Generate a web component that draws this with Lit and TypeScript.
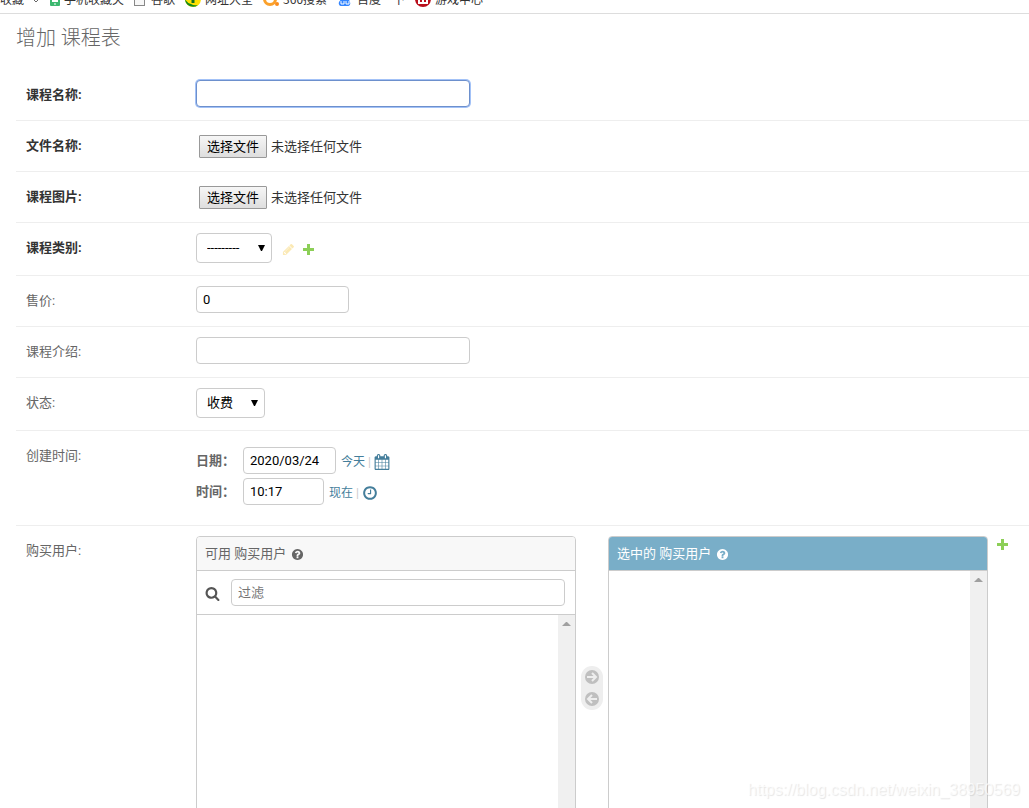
import { LitElement, html, css } from "lit";
import { customElement, query, state, property } from "lit/decorators.js";

const PATHS = {
  calendar:
    "M192 1664h288v-288h-288v288zm352 0h320v-288h-320v288zm-352-352h288v-320h-288v320zm352 0h320v-320h-320v320zm-352-384h288v-288h-288v288zm736 736h320v-288h-320v288zm-384-736h320v-288h-320v288zm768 736h288v-288h-288v288zm-384-352h320v-320h-320v320zm-352-864v-288q0-13-9.5-22.5t-22.5-9.5h-64q-13 0-22.5 9.5t-9.5 22.5v288q0 13 9.5 22.5t22.5 9.5h64q13 0 22.5-9.5t9.5-22.5zm736 864h288v-320h-288v320zm-384-384h320v-288h-320v288zm384 0h288v-288h-288v288zm32-480v-288q0-13-9.5-22.5t-22.5-9.5h-64q-13 0-22.5 9.5t-9.5 22.5v288q0 13 9.5 22.5t22.5 9.5h64q13 0 22.5-9.5t9.5-22.5zm384-64v1280q0 52-38 90t-90 38h-1408q-52 0-90-38t-38-90v-1280q0-52 38-90t90-38h128v-96q0-66 47-113t113-47h64q66 0 113 47t47 113v96h384v-96q0-66 47-113t113-47h64q66 0 113 47t47 113v96h128q52 0 90 38t38 90z",
  clock:
    "M1024 544v448q0 14-9 23t-23 9h-320q-14 0-23-9t-9-23v-64q0-14 9-23t23-9h224v-352q0-14 9-23t23-9h64q14 0 23 9t9 23zm416 352q0-148-73-273t-198-198-273-73-273 73-198 198-73 273 73 273 198 198 273 73 273-73 198-198 73-273zm224 0q0 209-103 385.5t-279.5 279.5-385.5 103-385.5-103-279.5-279.5-103-385.5 103-385.5 279.5-279.5 385.5-103 385.5 103 279.5 279.5 103 385.5z",
  help: "M1024 1376v-192q0-14-9-23t-23-9h-192q-14 0-23 9t-9 23v192q0 14 9 23t23 9h192q14 0 23-9t9-23zm256-672q0-88-55.5-163t-138.5-116-170-41q-243 0-371 213-15 24 8 42l132 100q7 6 19 6 16 0 25-12 53-68 86-92 34-24 86-24 48 0 85.5 26t37.5 59q0 38-20 61t-68 45q-63 28-115.5 86.5t-52.5 125.5v36q0 14 9 23t23 9h192q14 0 23-9t9-23q0-19 21.5-49.5t54.5-49.5q32-18 49-28.5t46-35 44.5-48 28-60.5 12.5-81zm384 192q0 209-103 385.5t-279.5 279.5-385.5 103-385.5-103-279.5-279.5-103-385.5 103-385.5 279.5-279.5 385.5-103 385.5 103 279.5 279.5 103 385.5z",
  search:
    "M1216 832q0-185-131.5-316.5t-316.5-131.5-316.5 131.5-131.5 316.5 131.5 316.5 316.5 131.5 316.5-131.5 131.5-316.5zm512 832q0 52-38 90t-90 38q-54 0-90-38l-343-342q-179 124-399 124-143 0-273.5-55.5t-225-150-150-225-55.5-273.5 55.5-273.5 150-225 225-150 273.5-55.5 273.5 55.5 225 150 150 225 55.5 273.5q0 220-124 399l343 343q37 37 37 90z",
  pencil:
    "M491 1536l91-91-235-235-91 91v107h128v128h107zm523-928q0-22-22-22-10 0-17 7l-542 542q-7 7-7 17 0 22 22 22 10 0 17-7l542-542q7-7 7-17zm-54-192l416 416-832 832h-416v-416zm683 96q0 53-37 90l-166 166-416-416 166-165q36-38 90-38 53 0 91 38l235 234q37 39 37 91z",
};

const icon = (name: keyof typeof PATHS, size: number) => html`
  <svg width=${size} height=${size} viewBox="0 0 1792 1792" fill="currentColor" aria-hidden="true">
    <path d=${PATHS[name]} />
  </svg>
`;

const plusIcon = html`
  <svg width="11" height="11" viewBox="0 0 11 11" aria-hidden="true">
    <path d="M4 0h3v4h4v3h-4v4h-3v-4h-4v-3h4z" fill="#8ccf57" />
  </svg>
`;

const moveIcon = (path: string) => html`
  <svg width="14" height="14" viewBox="0 0 14 14" fill="none" aria-hidden="true">
    <circle cx="7" cy="7" r="7" fill="#bfbfbf" />
    <path d=${path} stroke="#eee" stroke-width="2" />
  </svg>
`;

const FONT = css`Roboto, "Noto Sans CJK SC", sans-serif`;

@customElement("bookmark-bar")
export class BookmarkBar extends LitElement {
  static styles = css`
    :host {
      display: block;
      font: 12px/16px "Noto Sans CJK SC", sans-serif;
      color: #333;
    }
    .bar {
      display: flex;
      align-items: flex-end;
      gap: 10px;
      height: 13px;
      overflow: hidden;
      border-bottom: 1px solid #ddd;
    }
    .item {
      display: flex;
      align-items: center;
      gap: 4px;
      padding-bottom: 6px;
      color: inherit;
      text-decoration: none;
      white-space: nowrap;
    }
    svg {
      display: block;
    }
  `;

  private items = [
    {
      text: "手机收藏夹",
      icon: html`<svg width="10" height="16" viewBox="0 0 10 16">
        <rect x="0" y="1" width="10" height="14" rx="1" fill="#3db870" />
        <rect x="2" y="3" width="6" height="8" fill="#fff" />
        <path d="M4 13h2" stroke="#fff" />
      </svg>`,
    },
    {
      text: "谷歌",
      icon: html`<svg width="13" height="16" viewBox="0 0 13 16">
        <rect x="0.5" y="2.5" width="10" height="12" fill="#f7f7f7" stroke="#888" />
      </svg>`,
    },
    {
      text: "网址大全",
      icon: html`<svg width="16" height="16" viewBox="0 0 16 16">
        <circle cx="8" cy="8" r="8" fill="#ffe100" />
        <path d="M0 8a8 8 0 0 0 13 6q-4 1-7-1-4-1-6-5z" fill="#138a1c" />
        <path d="M8 4v8" stroke="#13701c" stroke-width="3" />
      </svg>`,
    },
    {
      text: "360搜索",
      icon: html`<svg width="16" height="16" viewBox="0 0 16 16">
        <circle cx="7" cy="8" r="5.5" fill="none" stroke="#fba12b" stroke-width="3" />
        <circle cx="14" cy="13" r="2" fill="#fb8c1c" />
      </svg>`,
    },
    {
      text: "百度一下",
      icon: html`<svg width="16" height="16" viewBox="0 0 16 16">
        <ellipse cx="5" cy="3" rx="2" ry="3" fill="#3385ff" />
        <ellipse cx="11" cy="3" rx="2" ry="3" fill="#3385ff" />
        <path d="M8 6q3 0 5 5 1 4-3 4h-5q-4 0-3-4 3-5 6-5z" fill="#3385ff" />
        <path d="M4 10v3h3v-3M9 10v3h3v-3" fill="none" stroke="#fff" />
      </svg>`,
    },
    {
      text: "游戏中心",
      icon: html`<svg width="16" height="16" viewBox="0 0 16 16">
        <circle cx="8" cy="8" r="8" fill="#b90f1c" />
        <path d="M4 6v6h8v-6M8 5v6" fill="none" stroke="#fff" stroke-width="2" />
      </svg>`,
    },
  ];

  render() {
    return html`
      <nav class="bar">
        <a class="item" href="#">
          收藏
          <svg width="12" height="16" viewBox="0 0 12 16">
            <path d="M5 8l3 3 3-3" fill="none" stroke="#666" stroke-width="1" />
          </svg>
        </a>
        ${this.items.map((b) => html`<a class="item" href="#">${b.icon}${b.text}</a>`)}
      </nav>
    `;
  }
}

@customElement("file-picker")
export class FilePicker extends LitElement {
  @property() label = "";
  @state() private fileName = "未选择任何文件";
  @query("input") private input!: HTMLInputElement;

  static styles = css`
    :host {
      display: block;
      padding: 4px 3px 3px;
      font: 13px/21px ${FONT};
      color: #333;
    }
    .picker {
      display: flex;
      align-items: center;
      gap: 4px;
    }
    .file {
      display: none;
    }
    .choose {
      box-sizing: border-box;
      height: 23px;
      padding: 0 7px;
      border: 1px solid #999;
      border-radius: 1px;
      background: linear-gradient(#f6f6f6, #dedede);
      font: inherit;
      color: #000;
    }
  `;

  render() {
    return html`
      <div class="picker">
        <input
          class="file"
          type="file"
          aria-label=${this.label}
          @change=${() => (this.fileName = this.input.files?.[0]?.name ?? "未选择任何文件")}
        />
        <button class="choose" type="button" @click=${() => this.input.click()}>选择文件</button>
        <span>${this.fileName}</span>
      </div>
    `;
  }
}

@customElement("app-root")
export class AppRoot extends LitElement {
  static styles = css`
    :host {
      display: block;
      position: relative;
      height: 100vh;
      overflow: hidden;
      background: #fff;
      font: 13px/20px ${FONT};
      color: #333;
    }
    svg {
      display: block;
      flex: none;
    }
    .content {
      padding: 12px 0 0 16px;
    }
    .title {
      margin: 0 0 20px;
      font-size: 20px;
      line-height: 24px;
      font-weight: 300;
      color: #666;
    }
    .row {
      display: flex;
      align-items: flex-start;
      padding: 10px;
      border-bottom: 1px solid #eee;
    }
    .label {
      flex: none;
      width: 170px;
      line-height: 30px;
      color: #666;
    }
    .required {
      font-weight: 700;
      color: #333;
    }
    .text {
      box-sizing: border-box;
      height: 27px;
      padding: 0 6px;
      border: 1px solid #ccc;
      border-radius: 4px;
      background: #fff;
      font: inherit;
      color: #000;
      outline: none;
    }
    .wide {
      width: 274px;
    }
    .focus {
      border-color: #6d90cd;
      box-shadow: 0 0 0 1px #a3c2f7;
    }
    .number {
      width: 153px;
    }
    .date {
      width: 93px;
    }
    .time {
      width: 81px;
    }
    .related {
      display: flex;
      align-items: center;
      padding-bottom: 2px;
    }
    .select {
      display: grid;
      align-items: center;
    }
    .select > * {
      grid-area: 1 / 1;
    }
    .select svg {
      justify-self: end;
      margin-right: 7px;
      pointer-events: none;
    }
    .drop {
      appearance: none;
      box-sizing: border-box;
      height: 30px;
      padding: 0 10px;
      border: 1px solid #ccc;
      border-radius: 4px;
      background: #fff;
      font: inherit;
      color: #000;
    }
    .category {
      width: 76px;
    }
    .status {
      width: 69px;
    }
    .action {
      display: flex;
      color: #447e9b;
    }
    .edit {
      margin: 2px 8px 0 10px;
      color: #fbe9b4;
    }
    .add {
      margin-top: 2px;
    }
    .stamps {
      display: flex;
      flex-direction: column;
      gap: 4px;
      padding: 6px 0 10px;
    }
    .stamp {
      display: flex;
      align-items: center;
    }
    .stamp-label {
      width: 47px;
      font-weight: 700;
      color: #666;
    }
    .shortcuts {
      display: flex;
      align-items: center;
      gap: 3px;
      margin: 2px 0 0 5px;
      font-size: 12px;
      color: #ccc;
    }
    .shortcuts a {
      color: #447e9b;
      text-decoration: none;
    }
    .selector {
      display: flex;
      align-items: flex-start;
      flex: 0 1 792px;
    }
    .pane {
      box-sizing: border-box;
      flex: 1 1 380px;
      border: 1px solid #ccc;
      border-radius: 4px;
      overflow: hidden;
    }
    .head {
      display: flex;
      align-items: center;
      gap: 5px;
      height: 33px;
      margin: 0;
      padding: 0 8px;
      border-bottom: 1px solid #ccc;
      background: #f8f8f8;
      font-size: 13px;
      font-weight: 400;
      color: #666;
    }
    .head svg {
      margin-top: 1px;
    }
    .chosen .head {
      background: #79aec8;
      color: #fff;
    }
    .filter {
      display: flex;
      align-items: center;
      gap: 11px;
      padding: 8px 10px 8px 8px;
      border-bottom: 1px solid #ccc;
      color: #555;
    }
    .filter .text {
      flex: 1;
      min-width: 0;
    }
    .filter .text::placeholder {
      color: #757575;
      opacity: 1;
    }
    .filter svg {
      margin-top: 2px;
    }
    .list {
      display: flex;
      height: 272px;
    }
    .tall {
      height: 316px;
    }
    .options {
      flex: 1;
      min-width: 0;
      border: 0;
      background: #fff;
      outline: none;
      overflow: hidden;
      font: inherit;
    }
    .scroll {
      width: 17px;
      background: #f0f0f0;
    }
    .scroll svg {
      margin: 6px 4px 0;
    }
    .chooser {
      display: flex;
      flex: none;
      flex-direction: column;
      align-items: center;
      gap: 8px;
      margin: 130px 5px 0;
      padding: 4px;
      border-radius: 11px;
      background: #eee;
    }
    .move {
      display: block;
      padding: 0;
      border: 0;
      background: none;
    }
    .add-user {
      margin: 3px 0 0 9px;
    }
    .watermark {
      position: absolute;
      right: 9px;
      bottom: 8px;
      font: 16px/20px "Liberation Sans", sans-serif;
      color: rgba(255, 255, 255, 0.7);
      text-shadow: 1px 1px 1px rgba(0, 0, 0, 0.1);
      pointer-events: none;
    }
  `;

  private arrow = html`
    <svg width="7" height="7" viewBox="0 0 7 7" aria-hidden="true">
      <path d="M0 0h7l-3 6h-1z" fill="#000" />
    </svg>
  `;

  private scrollbar = html`
    <div class="scroll">
      <svg width="9" height="5" viewBox="0 0 9 5" aria-hidden="true">
        <path d="M0 5l4-4h1l4 4z" fill="#a0a0a0" />
      </svg>
    </div>
  `;

  render() {
    return html`
      <bookmark-bar></bookmark-bar>
      <main class="content">
        <h1 class="title">增加 课程表</h1>
        <form @submit=${(e: Event) => e.preventDefault()}>
          <div class="row">
            <label class="label required" for="name">课程名称:</label>
            <input class="text wide focus" id="name" type="text" />
          </div>
          <div class="row">
            <span class="label required">文件名称:</span>
            <file-picker label="文件名称"></file-picker>
          </div>
          <div class="row">
            <span class="label required">课程图片:</span>
            <file-picker label="课程图片"></file-picker>
          </div>
          <div class="row">
            <label class="label required" for="category">课程类别:</label>
            <div class="related">
              <div class="select">
                <select class="drop category" id="category">
                  <option>---------</option>
                </select>
                ${this.arrow}
              </div>
              <a class="action edit" href="#" aria-label="编辑">${icon("pencil", 13)}</a>
              <a class="action add" href="#" aria-label="增加">${plusIcon}</a>
            </div>
          </div>
          <div class="row">
            <label class="label" for="price">售价:</label>
            <input class="text number" id="price" type="text" inputmode="numeric" value="0" />
          </div>
          <div class="row">
            <label class="label" for="intro">课程介绍:</label>
            <input class="text wide" id="intro" type="text" />
          </div>
          <div class="row">
            <label class="label" for="status">状态:</label>
            <div class="related">
              <div class="select">
                <select class="drop status" id="status">
                  <option>收费</option>
                </select>
                ${this.arrow}
              </div>
            </div>
          </div>
          <div class="row">
            <span class="label">创建时间:</span>
            <div class="stamps">
              <div class="stamp">
                <label class="stamp-label" for="date">日期：</label>
                <input class="text date" id="date" type="text" value="2020/03/24" />
                <span class="shortcuts">
                  <a href="#">今天</a>|
                  <a class="action" href="#" aria-label="选择日期">${icon("calendar", 16)}</a>
                </span>
              </div>
              <div class="stamp">
                <label class="stamp-label" for="time">时间：</label>
                <input class="text time" id="time" type="text" value="10:17" />
                <span class="shortcuts">
                  <a href="#">现在</a>|
                  <a class="action" href="#" aria-label="选择时间">${icon("clock", 16)}</a>
                </span>
              </div>
            </div>
          </div>
          <div class="row">
            <span class="label">购买用户:</span>
            <div class="selector">
              <section class="pane">
                <h2 class="head">可用 购买用户 ${icon("help", 13)}</h2>
                <label class="filter">
                  ${icon("search", 15)}
                  <input class="text" type="text" placeholder="过滤" aria-label="过滤" />
                </label>
                <div class="list">
                  <select class="options" multiple aria-label="可用 购买用户"></select>
                  ${this.scrollbar}
                </div>
              </section>
              <div class="chooser">
                <button class="move" type="button" aria-label="选择">
                  ${moveIcon("M2 7h8M7 3l4 4-4 4")}
                </button>
                <button class="move" type="button" aria-label="删除">
                  ${moveIcon("M12 7h-8M7 3l-4 4 4 4")}
                </button>
              </div>
              <section class="pane chosen">
                <h2 class="head">选中的 购买用户 ${icon("help", 13)}</h2>
                <div class="list tall">
                  <select class="options" multiple aria-label="选中的 购买用户"></select>
                  ${this.scrollbar}
                </div>
              </section>
            </div>
            <a class="action add-user" href="#" aria-label="增加">${plusIcon}</a>
          </div>
        </form>
      </main>
      <div class="watermark">https://blog.csdn.net/weixin_38950569</div>
    `;
  }
}
